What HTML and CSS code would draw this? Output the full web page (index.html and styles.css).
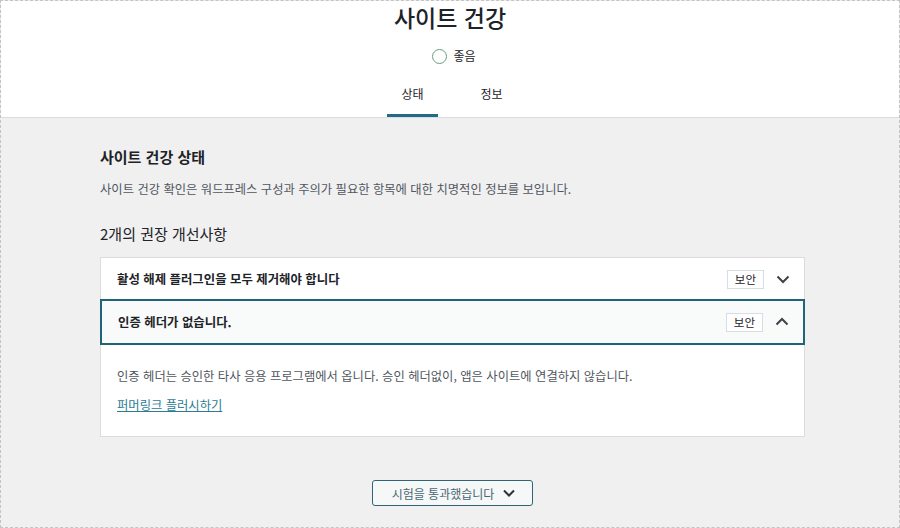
FILE: index.html
```html
<!DOCTYPE html>
<html lang="ko">
<head>
    <meta charset="UTF-8">
    <meta name="viewport" content="width=device-width, initial-scale=1.0">
    <title>사이트 건강</title>
    <link rel="stylesheet" href="styles.css">
</head>
<body>

    <div class="frame">

        <div class="health-header">
            <h1>사이트 건강</h1>
            <div class="health-status">
                <span class="status-ring"></span>
                <span>좋음</span>
            </div>
            <nav class="health-tabs">
                <a href="#" class="tab ativo">상태</a>
                <a href="#" class="tab">정보</a>
            </nav>
        </div>

        <div class="health-body">
            <h2>사이트 건강 상태</h2>
            <p class="intro">사이트 건강 확인은 워드프레스 구성과 주의가 필요한 항목에 대한 치명적인 정보를 보입니다.</p>

            <h3>2개의 권장 개선사항</h3>

            <div class="accordion">
                <div class="acc-item">
                    <button class="acc-head">
                        <span class="acc-title">활성 해제 플러그인을 모두 제거해야 합니다</span>
                        <span class="badge">보안</span>
                        <svg class="chev" width="14" height="14" viewBox="0 0 14 14"><polyline points="1.5,4.5 7,10 12.5,4.5" /></svg>
                    </button>
                </div>
                <div class="acc-item aberto">
                    <button class="acc-head">
                        <span class="acc-title">인증 헤더가 없습니다.</span>
                        <span class="badge">보안</span>
                        <svg class="chev" width="14" height="14" viewBox="0 0 14 14"><polyline points="1.5,9.5 7,4 12.5,9.5" /></svg>
                    </button>
                    <div class="acc-panel">
                        <p>인증 헤더는 승인한 타사 응용 프로그램에서 옵니다. 승인 헤더없이, 앱은 사이트에 연결하지 않습니다.</p>
                        <p><a href="#">퍼머링크 플러시하기</a></p>
                    </div>
                </div>
            </div>

            <div class="passed">
                <button class="passed-btn">
                    시험을 통과했습니다
                    <svg width="14" height="14" viewBox="0 0 14 14"><polyline points="2,4.5 7,9.5 12,4.5" /></svg>
                </button>
            </div>
        </div>

    </div>

</body>
</html>
```

FILE: styles.css
```css
body {
    margin: 0;
    font-family: "Noto Sans CJK KR", "Noto Sans", sans-serif;
    color: #1d2327;
    background: #fff;
}

.frame {
    width: 900px;
    height: 528px;
    box-sizing: border-box;
    border: 1px dashed #c4c4c4;
    background-color: #f0f0f1;
    overflow: hidden;
}

.health-header {
    background-color: #fff;
    border-bottom: 1px solid #dcdcde;
    text-align: center;
}

.health-header h1 {
    margin: 0;
    font-size: 23px;
    font-weight: 500;
    line-height: 32px;
}

.health-status {
    margin-top: 14px;
    display: flex;
    justify-content: center;
    align-items: center;
    gap: 6px;
    font-size: 12px;
    line-height: 18px;
    padding-left: 8px;
}

.status-ring {
    width: 13px;
    height: 13px;
    border: 1.5px solid #68a07a;
    border-radius: 50%;
}

.health-tabs {
    margin-top: 16px;
    display: flex;
    justify-content: center;
    gap: 28px;
    padding-left: 4px;
}

.tab {
    width: 51px;
    padding: 4px 0 11px;
    font-size: 12px;
    line-height: 18px;
    color: #1d2327;
    text-decoration: none;
    border-bottom: 3px solid transparent;
}

.tab.ativo {
    border-bottom-color: #216a88;
}

.health-body {
    padding: 0 94px 0 99px;
}

.health-body h2 {
    margin: 29px 0 0;
    font-size: 15px;
    font-weight: 700;
    line-height: 20px;
}

.intro {
    margin: 13px 0 0;
    font-size: 12.3px;
    line-height: 18px;
    color: #50575e;
}

.health-body h3 {
    margin: 25px 0 0;
    font-size: 15px;
    font-weight: 400;
    line-height: 22px;
}

.accordion {
    margin-top: 12px;
    border: 1px solid #dcdcde;
    background-color: #fff;
}

.acc-head {
    width: 100%;
    height: 42px;
    display: flex;
    align-items: center;
    padding: 0 14px 0 16px;
    border: none;
    background: #fff;
    font-family: inherit;
    color: #1d2327;
    text-align: left;
    box-sizing: border-box;
}

.acc-item + .acc-item .acc-head {
    border-top: 1px solid #dcdcde;
}

.aberto .acc-head {
    height: 46px;
    border: 2px solid #1f6479 !important;
    background-color: #f9fafa;
    margin: -1px -1px 0;
    width: calc(100% + 2px);
    padding-left: 16px;
}

.acc-title {
    flex: 1;
    font-size: 12.4px;
    font-weight: 700;
}

.badge {
    padding: 0 7px;
    font-size: 11.5px;
    line-height: 17px;
    border: 1px solid #d5dee4;
    background: #fff;
}

.chev {
    margin-left: 12px;
    fill: none;
    stroke: #3c434a;
    stroke-width: 2;
}

.acc-panel {
    padding: 22px 16px 11px;
}

.acc-panel p {
    margin: 0 0 11px;
    font-size: 12.3px;
    line-height: 18px;
    color: #50575e;
}

.acc-panel a {
    color: #2a7c95;
}

.passed {
    margin-top: 43px;
    display: flex;
    justify-content: center;
}

.passed-btn {
    display: flex;
    align-items: center;
    gap: 8px;
    height: 26px;
    padding: 0 16px 0 19px;
    border: 1px solid #2f6577;
    border-radius: 3px;
    background-color: #f6f7f7;
    font-family: inherit;
    font-size: 12px;
    color: #466874;
}

.passed-btn svg {
    fill: none;
    stroke: #2c3338;
    stroke-width: 2;
}
```
